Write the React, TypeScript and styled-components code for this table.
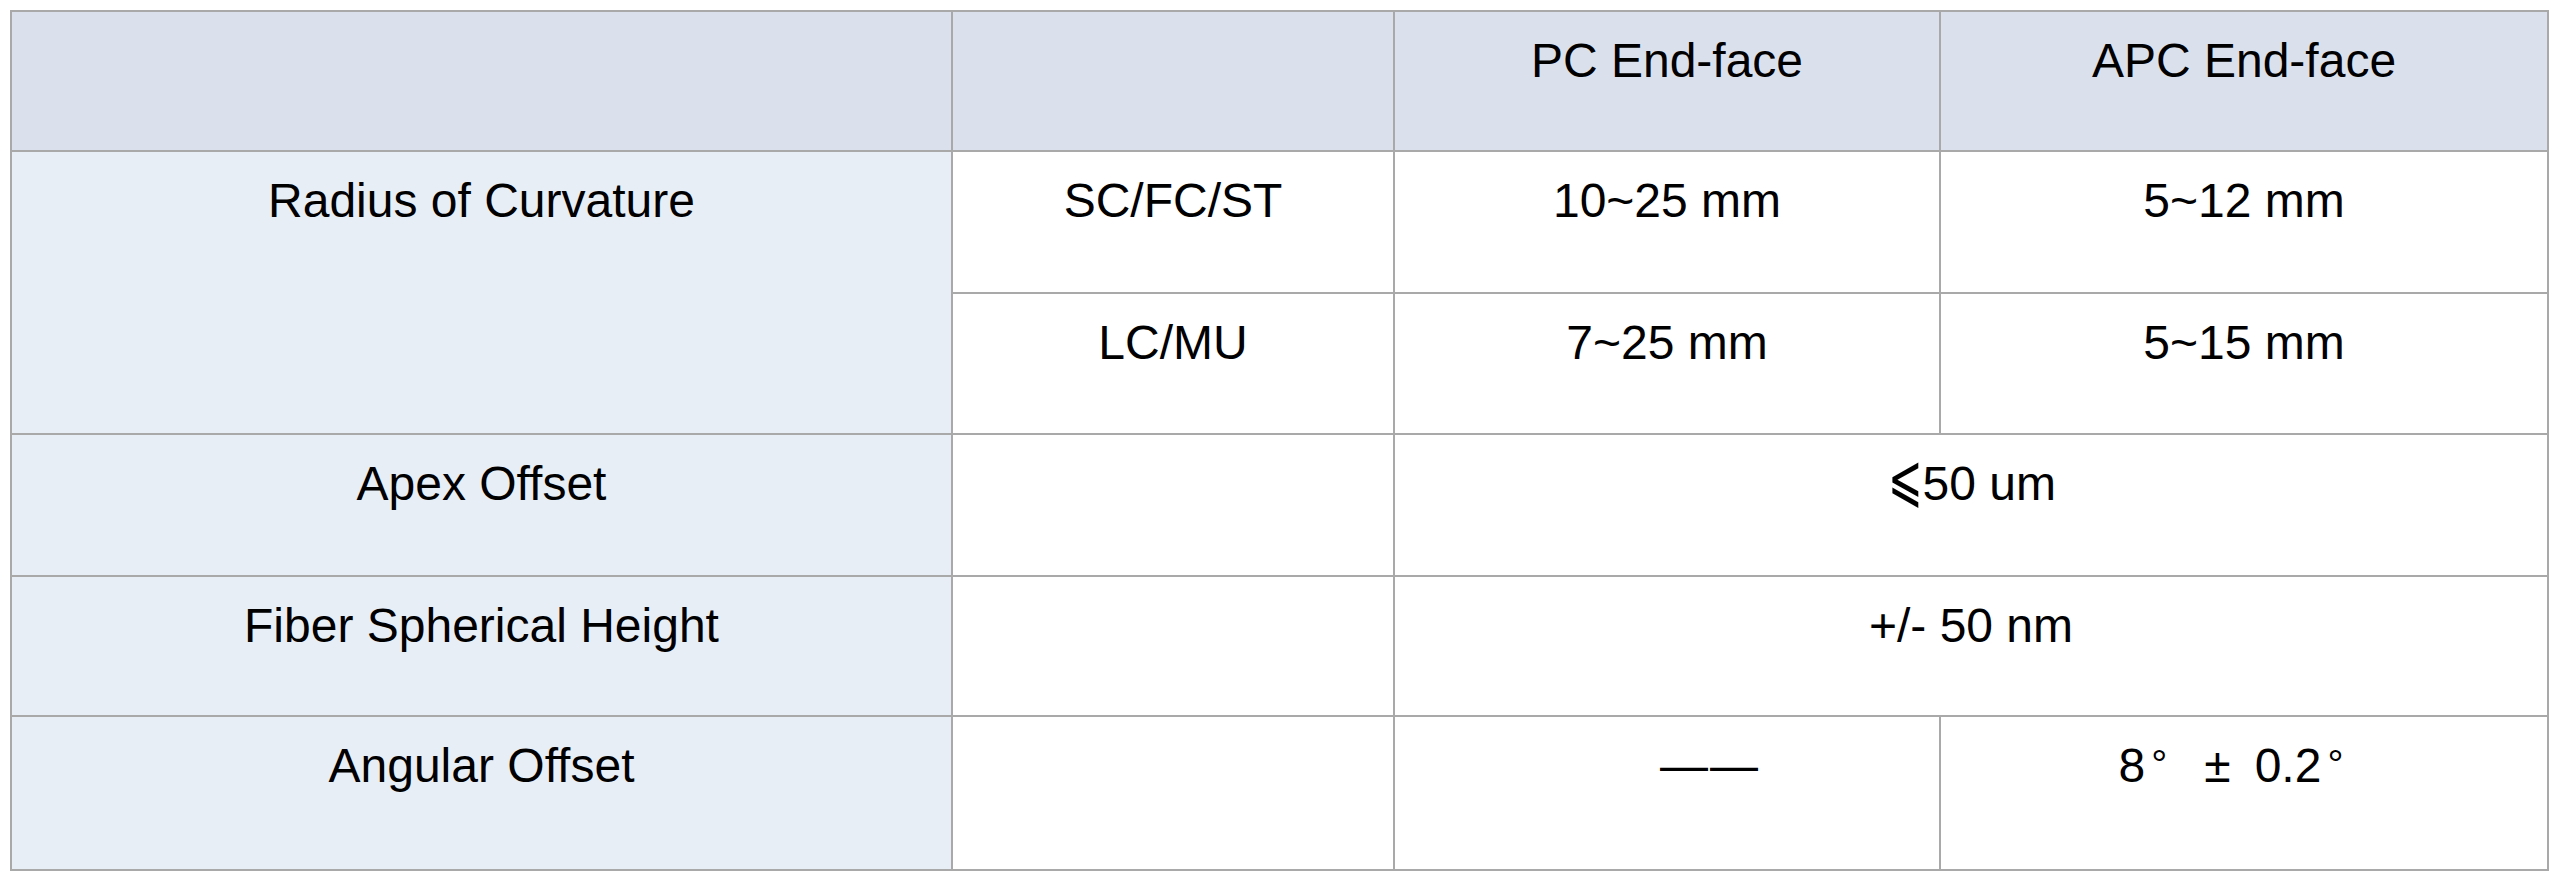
import React from "react";
import styled, { createGlobalStyle } from "styled-components";

const GlobalStyle = createGlobalStyle`
  html, body {
    margin: 0;
    padding: 0;
    background: #ffffff;
  }
  body {
    font-family: "Liberation Sans", Arial, sans-serif;
    color: #000;
  }
`;

const Page = styled.div`
  padding: 10px 11px 10px 10px;
  background: #ffffff;
`;

const SpecTable = styled.table`
  width: 2539px;
  table-layout: fixed;
  border-collapse: collapse;
  border: 2px solid #a9a9a9;
  font-family: "Liberation Sans", Arial, sans-serif;
  font-size: 48px;
  color: #000;
`;

const Row = styled.tr<{ $h: number }>`
  height: ${(p) => p.$h}px;
`;

type Tone = "head" | "label" | "plain";

const toneBg: Record<Tone, string> = {
  head: "#dae1ed",
  label: "#e8eef6",
  plain: "#ffffff",
};

const Cell = styled.td<{ $tone?: Tone; $shift?: number }>`
  border: 2px solid #a9a9a9;
  background: ${(p) => toneBg[p.$tone ?? "plain"]};
  vertical-align: top;
  text-align: center;
  padding: 21px 0 0 ${(p) => p.$shift ?? 0}px;
  font-weight: 400;
  white-space: nowrap;
  line-height: normal;
`;

const Wide = styled.span`
  display: inline-block;
  width: 1em;
`;

const Degree = styled(Wide)`
  text-align: left;
  padding-left: 6px;
  box-sizing: border-box;
  font-size: 40px;
  width: 48px;
  vertical-align: 4px;
`;

const PlusMinus = styled(Wide)`
  text-align: center;
`;

const Leq = styled.span`
  font-family: "DejaVu Sans", sans-serif;
  font-size: 46px;
  display: inline-block;
  margin-right: -2px;
  transform: scale(0.9, 1.4);
  transform-origin: 50% 80%;
`;

const Dash = styled.span`
  font-family: "Liberation Sans", "Noto Sans CJK SC", sans-serif;
  letter-spacing: 2px;
`;

export default function App() {
  return (
    <>
      <GlobalStyle />
      <Page>
        <SpecTable>
          <colgroup>
            <col style={{ width: 941 }} />
            <col style={{ width: 442 }} />
            <col style={{ width: 546 }} />
            <col style={{ width: 608 }} />
          </colgroup>
          <thead>
            <Row $h={140}>
              <Cell as="th" $tone="head" />
              <Cell as="th" $tone="head" />
              <Cell as="th" $tone="head">PC End-face</Cell>
              <Cell as="th" $tone="head">APC End-face</Cell>
            </Row>
          </thead>
          <tbody>
            <Row $h={142}>
              <Cell $tone="label" rowSpan={2}>Radius of Curvature</Cell>
              <Cell>SC/FC/ST</Cell>
              <Cell>10~25 mm</Cell>
              <Cell>5~12 mm</Cell>
            </Row>
            <Row $h={141}>
              <Cell>LC/MU</Cell>
              <Cell>7~25 mm</Cell>
              <Cell>5~15 mm</Cell>
            </Row>
            <Row $h={142}>
              <Cell $tone="label">Apex Offset</Cell>
              <Cell />
              <Cell colSpan={2}>
                <Leq>⩽</Leq>50 um
              </Cell>
            </Row>
            <Row $h={140}>
              <Cell $tone="label">Fiber Spherical Height</Cell>
              <Cell />
              <Cell colSpan={2}>+/- 50 nm</Cell>
            </Row>
            <Row $h={154}>
              <Cell $tone="label">Angular Offset</Cell>
              <Cell />
              <Cell $shift={86}>
                <Dash>——</Dash>
              </Cell>
              <Cell>
                8<Degree>°</Degree>
                <PlusMinus>±</PlusMinus> 0.2<Degree>°</Degree>
              </Cell>
            </Row>
          </tbody>
        </SpecTable>
      </Page>
    </>
  );
}
